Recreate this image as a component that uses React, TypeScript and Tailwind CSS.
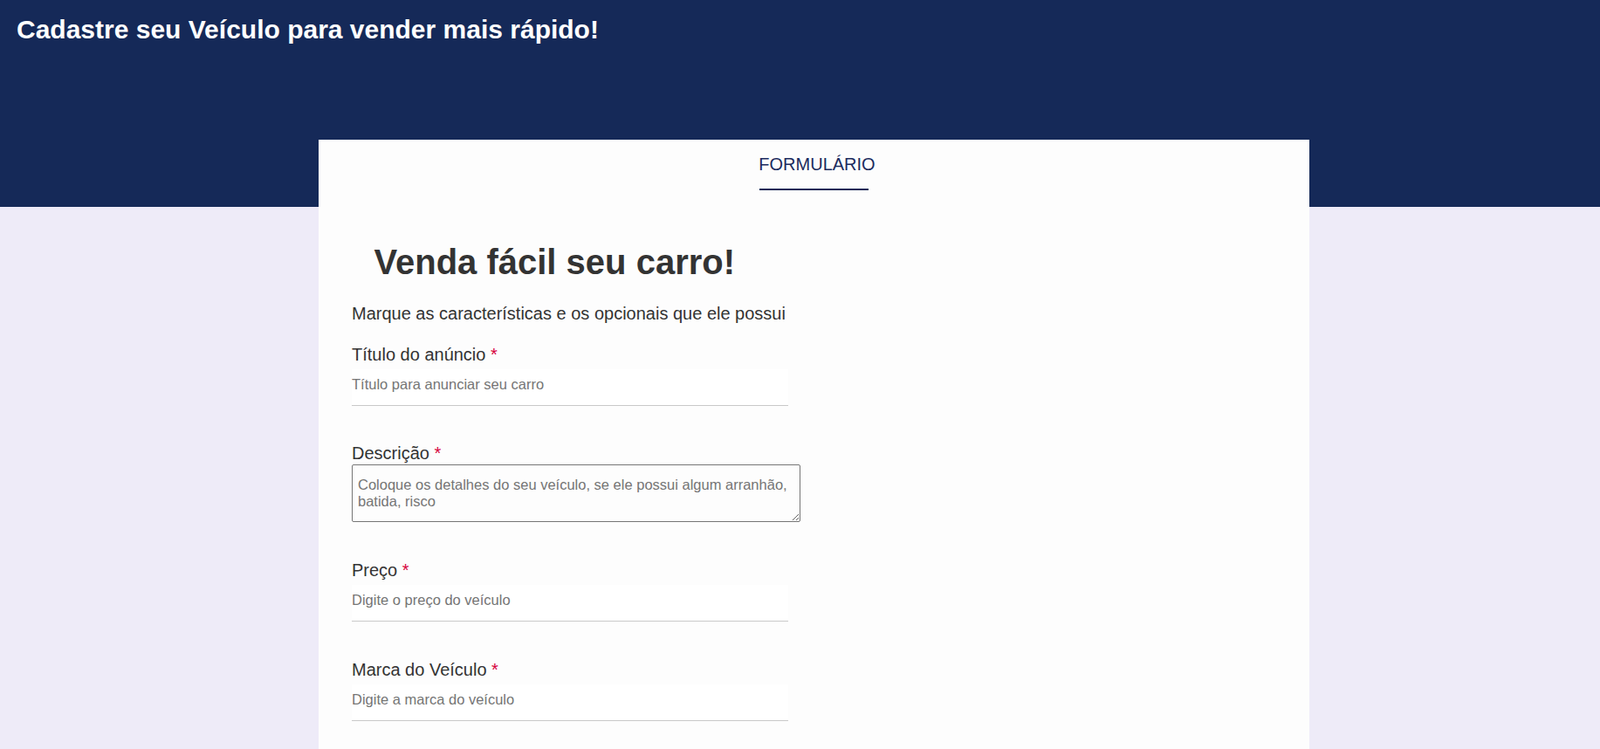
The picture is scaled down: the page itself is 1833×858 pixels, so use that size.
import React from "react";

function Label({ text }: { text: string }) {
  return (
    <label className="block h-[23px] text-[20px] leading-[23px] text-[#333333]">
      {text} <span className="text-[#d6003c]">*</span>
    </label>
  );
}

function Field({ label, placeholder, mt }: { label: string; placeholder: string; mt: string }) {
  return (
    <div className={mt}>
      <Label text={label} />
      <input
        type="text"
        placeholder={placeholder}
        className="mt-[5px] block h-[42px] w-[500px] border-0 border-b border-solid border-[#c9c9c9] bg-white px-0 pb-[5px] text-[16.5px] text-[#333333] outline-none placeholder:text-[#757575]"
      />
    </div>
  );
}

export default function App() {
  return (
    <div className="min-h-screen bg-[#eeebf8] font-['Liberation_Sans',Arial,sans-serif]">
      <header className="h-[237px] bg-[#152958] pl-[19px] pt-[17px]">
        <h1 className="text-[30px] font-bold leading-[34px] text-white">
          Cadastre seu Veículo para vender mais rápido!
        </h1>
      </header>
      <main className="relative -mt-[77px] ml-[365px] min-h-[698px] w-[1135px] bg-[#fdfdfd] pt-[16.6px]">
        <div className="flex flex-col items-center">
          <span className="pl-[7px] text-[20px] leading-[23px] text-[#1b2b5e]">FORMULÁRIO</span>
          <div className="mt-[16.4px] h-[2px] w-[125px] bg-[#152958]" />
        </div>
        <form className="pl-[38px]">
          <h2 className="ml-[25.5px] mt-[59px] text-[40px] font-bold leading-[46px] text-[#333333]">
            Venda fácil seu carro!
          </h2>
          <p className="mt-[24.6px] text-[20px] leading-[23px] text-[#333333]">
            Marque as características e os opcionais que ele possui
          </p>
          <Field mt="mt-[24.4px]" label="Título do anúncio" placeholder="Título para anunciar seu carro" />
          <div className="mt-[43.5px]">
            <Label text="Descrição" />
            <textarea
              placeholder="Coloque os detalhes do seu veículo, se ele possui algum arranhão, batida, risco"
              className="mt-[1px] block h-[66px] w-[514px] rounded-[2px] border border-solid border-[#767676] bg-[#fdfdfd] px-[6px] pb-[12px] pt-[13px] text-[16.5px] leading-[19px] text-[#333333] outline-none placeholder:text-[#757575]"
            />
          </div>
          <Field mt="mt-[43.5px]" label="Preço" placeholder="Digite o preço do veículo" />
          <Field mt="mt-[44px]" label="Marca do Veículo" placeholder="Digite a marca do veículo" />
        </form>
      </main>
    </div>
  );
}
